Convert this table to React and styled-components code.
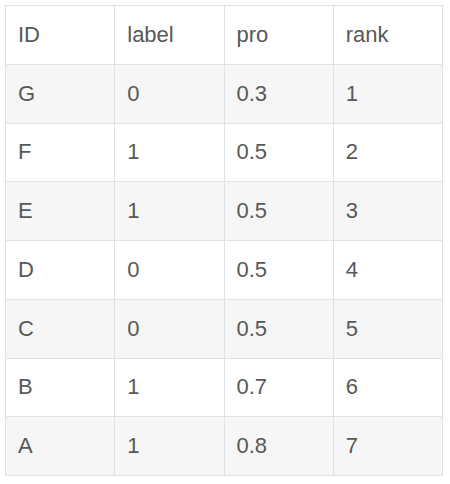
import React from "react";
import styled, { createGlobalStyle } from "styled-components";

const Global = createGlobalStyle`
  html, body { margin: 0; padding: 0; background: #fff; }
  body { font-family: "Liberation Sans", Arial, sans-serif; }
`;

const Wrap = styled.div`
  padding: 5px 0 0 5px;
`;

const Table = styled.table`
  border-collapse: collapse;
  width: 438px;
  table-layout: fixed;
  color: #585858;
  font-size: 22px;
`;

const Row = styled.tr`
  height: 58.75px;
  background: ${(p) => (p.$striped ? "#f6f6f6" : "#fff")};
`;

const Cell = styled.td`
  border: 1px solid #e1e1e1;
  padding: 0 0 0 12px;
  text-align: left;
  font-weight: normal;
  vertical-align: middle;
`;

const rows = [
  ["G", "0", "0.3", "1"],
  ["F", "1", "0.5", "2"],
  ["E", "1", "0.5", "3"],
  ["D", "0", "0.5", "4"],
  ["C", "0", "0.5", "5"],
  ["B", "1", "0.7", "6"],
  ["A", "1", "0.8", "7"],
];

export default function App() {
  return (
    <Wrap>
      <Global />
      <Table>
        <thead>
          <Row>
            {["ID", "label", "pro", "rank"].map((h) => (
              <Cell as="th" key={h}>{h}</Cell>
            ))}
          </Row>
        </thead>
        <tbody>
          {rows.map((r, i) => (
            <Row key={r[0]} $striped={i % 2 === 0}>
              {r.map((c, j) => (
                <Cell key={j}>{c}</Cell>
              ))}
            </Row>
          ))}
        </tbody>
      </Table>
    </Wrap>
  );
}
